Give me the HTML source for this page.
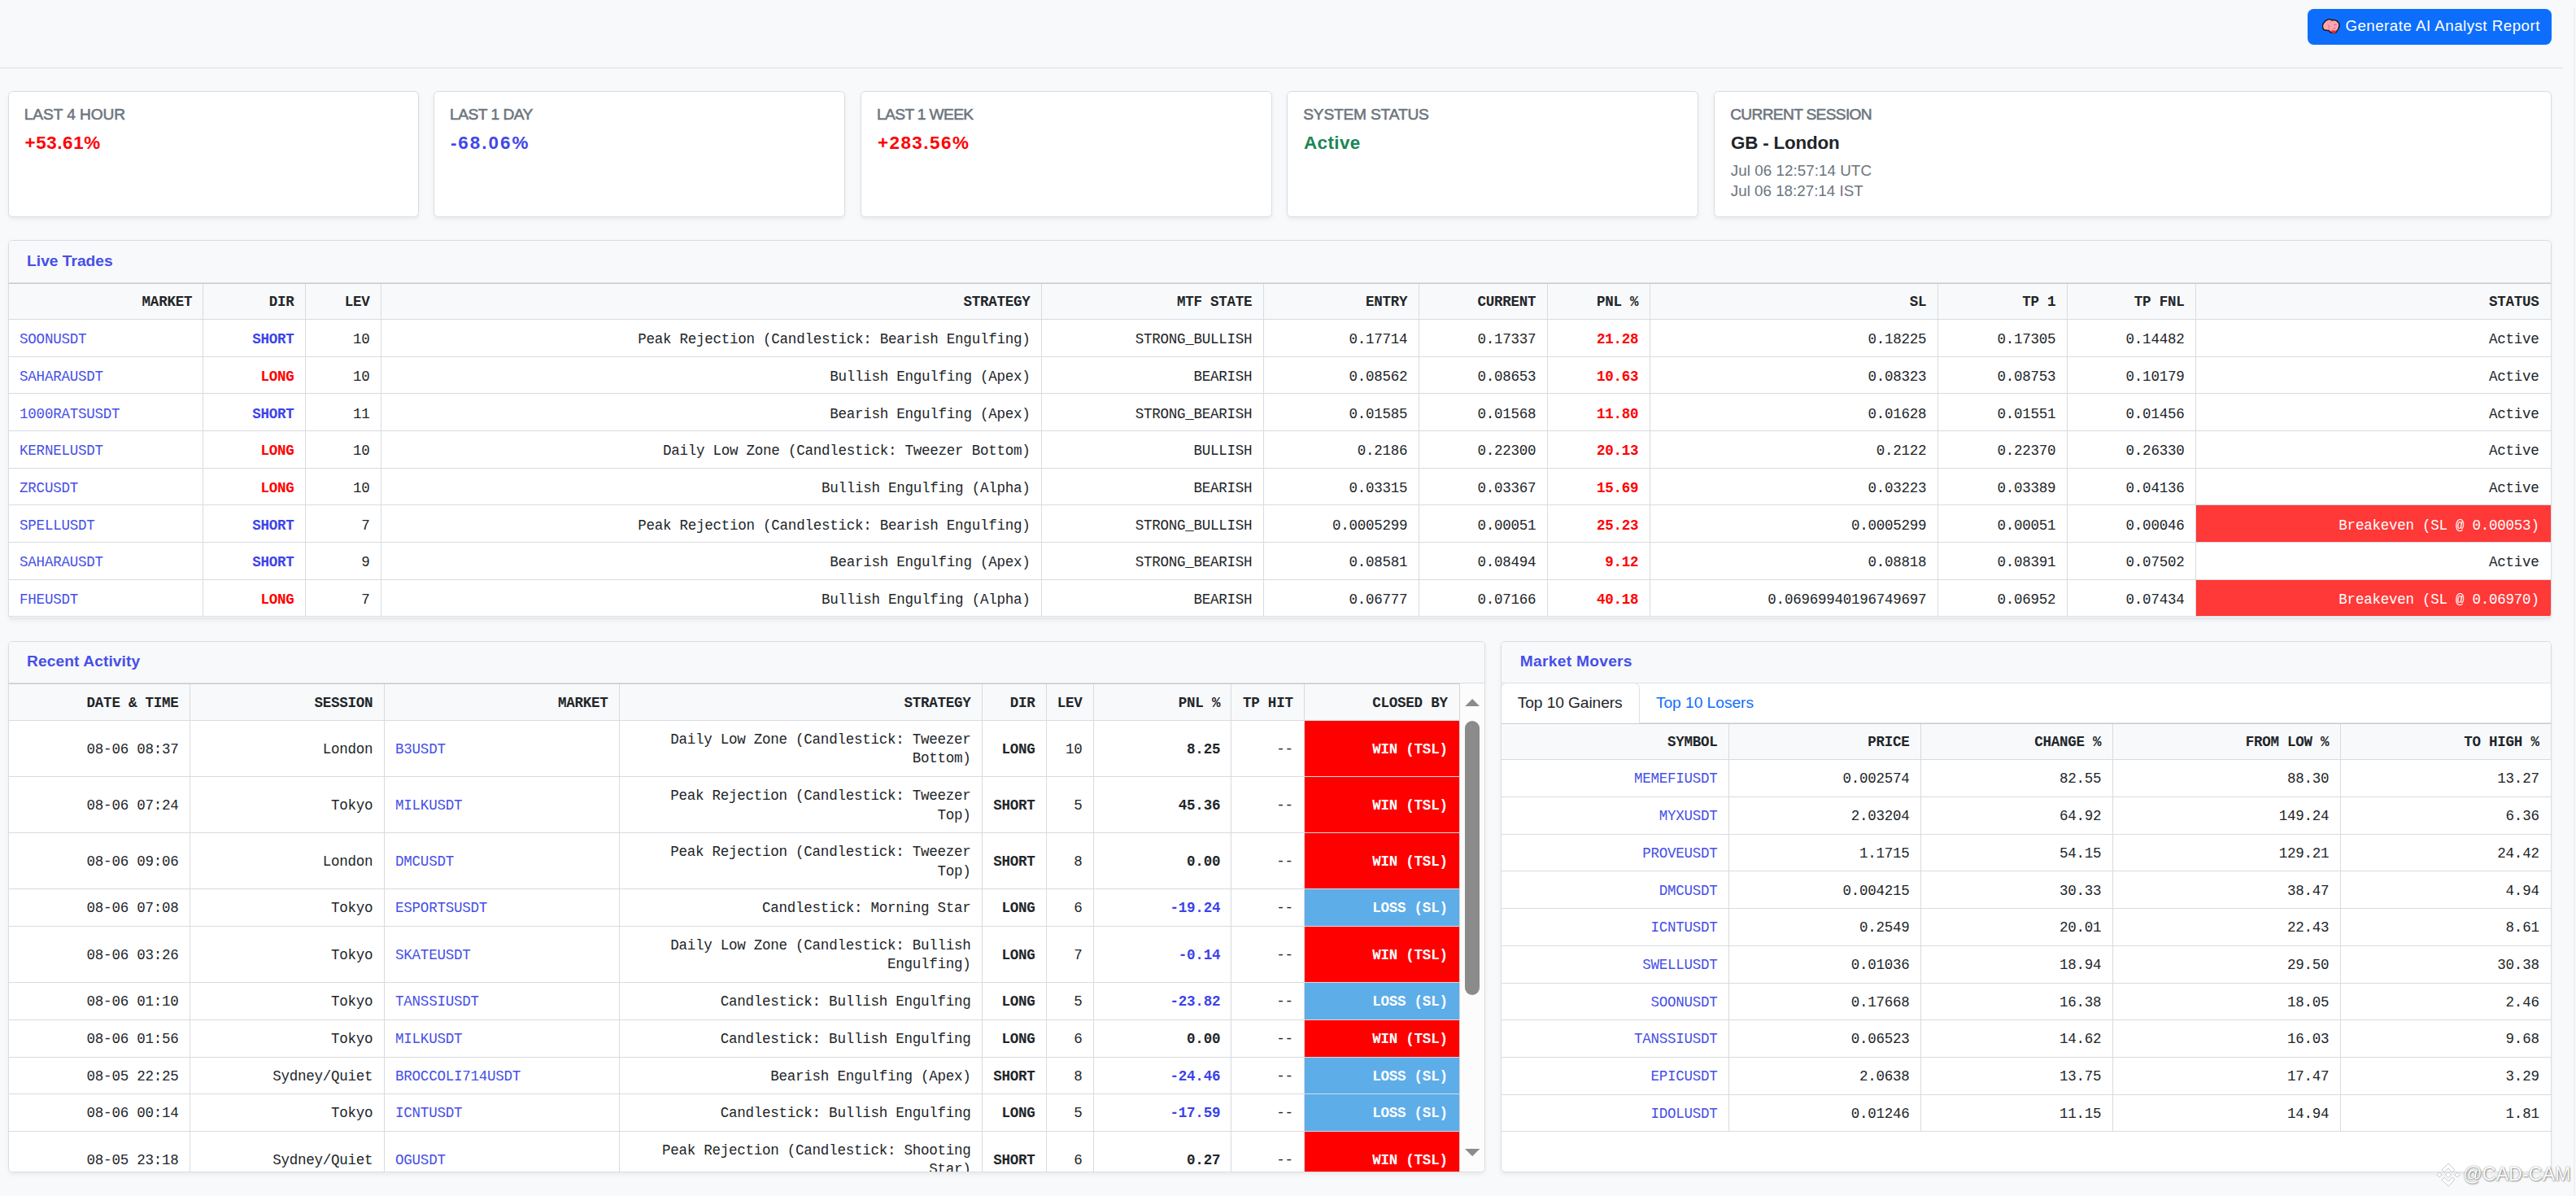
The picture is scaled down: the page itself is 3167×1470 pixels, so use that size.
<!DOCTYPE html>
<html lang="en">
<head>
<meta charset="utf-8">
<title>Trading Dashboard</title>
<style>
html,body{margin:0;padding:0}
body{width:3167px;height:1470px;overflow:hidden;background:#f8f9fa;font-family:"Liberation Sans",sans-serif;color:#212529;position:relative}
*{box-sizing:border-box}
.abs{position:absolute}
.btn{left:2836.8px;top:10.8px;width:300.3px;height:44.3px;background:#0d6efd;border-radius:7.5px;color:#fff;font-size:18.7px;line-height:44px;white-space:nowrap}
.btn svg{position:absolute;left:18.3px;top:12.1px}
.btn span{position:absolute;left:46.6px;top:-0.7px;letter-spacing:0.5px}
.hr{left:0;top:83px;width:3151px;height:1px;background:#dcdfe3}
.card{position:absolute;background:#fff;border:1px solid #d9dce2;border-radius:5.5px;box-shadow:0 2.5px 5px rgba(0,0,0,.055)}
.stat{top:112px;height:154.9px}
.lab{position:absolute;left:19.2px;top:16.15px;font-size:19.2px;line-height:24px;color:#6c757d;font-weight:400;white-space:nowrap;-webkit-text-stroke:0.55px #6c757d}
.val{position:absolute;left:20px;top:49.15px;font-size:22.4px;line-height:28px;font-weight:700;white-space:nowrap}
.sub{position:absolute;left:19.8px;font-size:18.8px;line-height:24px;color:#6c757d;white-space:nowrap}
.sec{overflow:hidden}
.sech{position:absolute;left:0;top:0;right:0;background:#f8f9fa;border-bottom:1px solid #dadde2}
.sech span{position:absolute;left:22.5px;font-size:19.2px;font-weight:700;color:#464fe8;white-space:nowrap;line-height:24px}
.tbl{position:absolute;left:0;border-top:1px solid #c9cdd2;font-family:"Liberation Mono",monospace;font-size:17.5px;letter-spacing:-0.24px;line-height:23.33px;color:#212529}
.r{display:flex;border-bottom:1px solid #d8dbe0;background:#fff}
.r.h{background:#f8f9fa;font-weight:700}
.c{flex:none;height:100%;border-right:1px solid #d8dbe0;padding:0 13.3px 0 13.5px;display:flex;align-items:center;justify-content:flex-end;text-align:right;white-space:nowrap}
.c.last{border-right:none;padding-right:14.6px}
.c.l{justify-content:flex-start;text-align:left}
.c span{display:block;position:relative;top:var(--b,2.7px)}
.r.h .c span{top:var(--h,1.3px)}
.lk{color:#464fe8}
.b{font-weight:700}
.sh{color:#3b43ea}
.lg{color:#ff0000}
.be{background:#ff3838;color:#fff}
.win{background:#ff0000;color:#fff}
.loss{background:#5dade9;color:#fff}
.tab{position:absolute;font-size:19.2px;line-height:24px;white-space:nowrap}
.wm{position:absolute;left:3028.3px;top:1428.6px;font-size:23px;line-height:28px;color:#fff;white-space:nowrap;letter-spacing:0.2px;text-shadow:0 0 1.5px rgba(0,0,0,.55),1px 1px 2px rgba(0,0,0,.35)}
</style>
</head>
<body>

<div class="abs btn"><svg width="21.6" height="18.6" viewBox="-0.4 -0.4 21.6 18.6"><path d="M8.2 0.4C9.8 0.3 11.2 1 12.3 1.7 13.3 1 14.6 0.9 15.6 1.3 17 1.7 18.2 2.6 18.8 3.6 19.9 4.5 20.6 5.8 20.5 7.1 20.7 8.4 20.4 9.6 19.9 10.5 19.8 11.5 19.5 12.3 19 12.9 18.6 13.8 18 14.4 17.3 14.9 17 16 16.5 16.8 15.8 17.2 14.9 17.7 14 17.8 13.2 17.6 12.1 17.5 11 17.2 10.2 16.6 9.2 16 8.4 15.2 7.9 14.3 7 14.1 6.2 13.9 5.3 13.8 4 14 2.8 13.9 1.8 13.4 1 12.6 0.5 11.6 0.3 10.5 0 9.6 0 8.6 0.2 7.6 0.4 6.4 1 5.3 1.8 4.4 2.5 3.3 3.5 2.4 4.7 1.8 5.7 1 6.9 0.5 8.2 0.4Z" fill="#fba7b2" stroke="#1f1819" stroke-width="1.5" stroke-linejoin="round"/><path d="M10.3 14.1L17.2 14.1C17 15.6 16.5 16.5 15.7 16.9 14.9 17.3 14 17.4 13.2 17.2 12.1 17.1 11.1 16.8 10.4 16.2Z" fill="#ff2233"/><path d="M10.5 2.6L9.4 4.4M6.4 7L7.9 8.5L7.6 12.3M7.9 8.5L8.9 7.6M15.5 5.6L15.5 7.3M13.5 7.3L17.6 7.3M16.4 11.1L14.3 11.1L12.6 13.2" fill="none" stroke="#f2506f" stroke-width="0.8"/></svg><span>Generate AI Analyst Report</span></div>
<div class="abs hr"></div>

<div class="card stat" style="left:9.6px;width:505.4px"><div class="lab" style="letter-spacing:-0.12px">LAST 4 HOUR</div><div class="val" style="letter-spacing:0.58px;color:#ff0000">+53.61%</div></div>
<div class="card stat" style="left:532.9px;width:506.1px"><div class="lab" style="letter-spacing:-0.52px">LAST 1 DAY</div><div class="val" style="letter-spacing:2.0px;color:#4047e8">-68.06%</div></div>
<div class="card stat" style="left:1057.9px;width:506.1px"><div class="lab" style="letter-spacing:-0.64px">LAST 1 WEEK</div><div class="val" style="letter-spacing:1.5px;color:#ff0000">+283.56%</div></div>
<div class="card stat" style="left:1582px;width:505.9px"><div class="lab" style="letter-spacing:-0.2px">SYSTEM STATUS</div><div class="val" style="letter-spacing:0.4px;color:#198754">Active</div></div>
<div class="card stat" style="left:2107px;width:1029.6px"><div class="lab" style="letter-spacing:-0.69px">CURRENT SESSION</div><div class="val" style="letter-spacing:-0.18px;color:#212529">GB - London</div><div class="sub" style="top:85.2px;letter-spacing:0.05px">Jul 06 12:57:14 UTC</div><div class="sub" style="top:110.2px">Jul 06 18:27:14 IST</div></div>

<!-- Live Trades -->
<div class="card sec" style="left:9.6px;top:294.6px;width:3127px;height:465.4px">
  <div class="sech" style="height:52px"><span style="top:12.95px">Live Trades</span></div>
  <div class="tbl" style="top:52px;width:3127px">
<div class="r h" style="height:44.3px"><div class="c " style="width:239.9px;"><span>MARKET</span></div><div class="c " style="width:125.3px;"><span>DIR</span></div><div class="c " style="width:93.1px;"><span>LEV</span></div><div class="c " style="width:811.9px;"><span>STRATEGY</span></div><div class="c " style="width:272.9px;"><span>MTF STATE</span></div><div class="c " style="width:190.9px;"><span>ENTRY</span></div><div class="c " style="width:158.0px;"><span>CURRENT</span></div><div class="c " style="width:126.1px;"><span>PNL %</span></div><div class="c " style="width:354.0px;"><span>SL</span></div><div class="c " style="width:159.0px;"><span>TP 1</span></div><div class="c " style="width:158.1px;"><span>TP FNL</span></div><div class="c  last" style="width:436.5px;"><span>STATUS</span></div></div>
<div class="r " style="height:45.7px"><div class="c l lk" style="width:239.9px;"><span>SOONUSDT</span></div><div class="c b sh" style="width:125.3px;"><span>SHORT</span></div><div class="c " style="width:93.1px;"><span>10</span></div><div class="c " style="width:811.9px;"><span>Peak Rejection (Candlestick: Bearish Engulfing)</span></div><div class="c " style="width:272.9px;"><span>STRONG_BULLISH</span></div><div class="c " style="width:190.9px;"><span>0.17714</span></div><div class="c " style="width:158.0px;"><span>0.17337</span></div><div class="c b lg" style="width:126.1px;"><span>21.28</span></div><div class="c " style="width:354.0px;"><span>0.18225</span></div><div class="c " style="width:159.0px;"><span>0.17305</span></div><div class="c " style="width:158.1px;"><span>0.14482</span></div><div class="c  last" style="width:436.5px;"><span>Active</span></div></div>
<div class="r " style="height:45.7px"><div class="c l lk" style="width:239.9px;"><span>SAHARAUSDT</span></div><div class="c b lg" style="width:125.3px;"><span>LONG</span></div><div class="c " style="width:93.1px;"><span>10</span></div><div class="c " style="width:811.9px;"><span>Bullish Engulfing (Apex)</span></div><div class="c " style="width:272.9px;"><span>BEARISH</span></div><div class="c " style="width:190.9px;"><span>0.08562</span></div><div class="c " style="width:158.0px;"><span>0.08653</span></div><div class="c b lg" style="width:126.1px;"><span>10.63</span></div><div class="c " style="width:354.0px;"><span>0.08323</span></div><div class="c " style="width:159.0px;"><span>0.08753</span></div><div class="c " style="width:158.1px;"><span>0.10179</span></div><div class="c  last" style="width:436.5px;"><span>Active</span></div></div>
<div class="r " style="height:45.7px"><div class="c l lk" style="width:239.9px;"><span>1000RATSUSDT</span></div><div class="c b sh" style="width:125.3px;"><span>SHORT</span></div><div class="c " style="width:93.1px;"><span>11</span></div><div class="c " style="width:811.9px;"><span>Bearish Engulfing (Apex)</span></div><div class="c " style="width:272.9px;"><span>STRONG_BEARISH</span></div><div class="c " style="width:190.9px;"><span>0.01585</span></div><div class="c " style="width:158.0px;"><span>0.01568</span></div><div class="c b lg" style="width:126.1px;"><span>11.80</span></div><div class="c " style="width:354.0px;"><span>0.01628</span></div><div class="c " style="width:159.0px;"><span>0.01551</span></div><div class="c " style="width:158.1px;"><span>0.01456</span></div><div class="c  last" style="width:436.5px;"><span>Active</span></div></div>
<div class="r " style="height:45.7px"><div class="c l lk" style="width:239.9px;"><span>KERNELUSDT</span></div><div class="c b lg" style="width:125.3px;"><span>LONG</span></div><div class="c " style="width:93.1px;"><span>10</span></div><div class="c " style="width:811.9px;"><span>Daily Low Zone (Candlestick: Tweezer Bottom)</span></div><div class="c " style="width:272.9px;"><span>BULLISH</span></div><div class="c " style="width:190.9px;"><span>0.2186</span></div><div class="c " style="width:158.0px;"><span>0.22300</span></div><div class="c b lg" style="width:126.1px;"><span>20.13</span></div><div class="c " style="width:354.0px;"><span>0.2122</span></div><div class="c " style="width:159.0px;"><span>0.22370</span></div><div class="c " style="width:158.1px;"><span>0.26330</span></div><div class="c  last" style="width:436.5px;"><span>Active</span></div></div>
<div class="r " style="height:45.7px"><div class="c l lk" style="width:239.9px;"><span>ZRCUSDT</span></div><div class="c b lg" style="width:125.3px;"><span>LONG</span></div><div class="c " style="width:93.1px;"><span>10</span></div><div class="c " style="width:811.9px;"><span>Bullish Engulfing (Alpha)</span></div><div class="c " style="width:272.9px;"><span>BEARISH</span></div><div class="c " style="width:190.9px;"><span>0.03315</span></div><div class="c " style="width:158.0px;"><span>0.03367</span></div><div class="c b lg" style="width:126.1px;"><span>15.69</span></div><div class="c " style="width:354.0px;"><span>0.03223</span></div><div class="c " style="width:159.0px;"><span>0.03389</span></div><div class="c " style="width:158.1px;"><span>0.04136</span></div><div class="c  last" style="width:436.5px;"><span>Active</span></div></div>
<div class="r " style="height:45.7px"><div class="c l lk" style="width:239.9px;"><span>SPELLUSDT</span></div><div class="c b sh" style="width:125.3px;"><span>SHORT</span></div><div class="c " style="width:93.1px;"><span>7</span></div><div class="c " style="width:811.9px;"><span>Peak Rejection (Candlestick: Bearish Engulfing)</span></div><div class="c " style="width:272.9px;"><span>STRONG_BULLISH</span></div><div class="c " style="width:190.9px;"><span>0.0005299</span></div><div class="c " style="width:158.0px;"><span>0.00051</span></div><div class="c b lg" style="width:126.1px;"><span>25.23</span></div><div class="c " style="width:354.0px;"><span>0.0005299</span></div><div class="c " style="width:159.0px;"><span>0.00051</span></div><div class="c " style="width:158.1px;"><span>0.00046</span></div><div class="c be last" style="width:436.5px;"><span>Breakeven (SL @ 0.00053)</span></div></div>
<div class="r " style="height:45.7px"><div class="c l lk" style="width:239.9px;"><span>SAHARAUSDT</span></div><div class="c b sh" style="width:125.3px;"><span>SHORT</span></div><div class="c " style="width:93.1px;"><span>9</span></div><div class="c " style="width:811.9px;"><span>Bearish Engulfing (Apex)</span></div><div class="c " style="width:272.9px;"><span>STRONG_BEARISH</span></div><div class="c " style="width:190.9px;"><span>0.08581</span></div><div class="c " style="width:158.0px;"><span>0.08494</span></div><div class="c b lg" style="width:126.1px;"><span>9.12</span></div><div class="c " style="width:354.0px;"><span>0.08818</span></div><div class="c " style="width:159.0px;"><span>0.08391</span></div><div class="c " style="width:158.1px;"><span>0.07502</span></div><div class="c  last" style="width:436.5px;"><span>Active</span></div></div>
<div class="r " style="height:45.7px"><div class="c l lk" style="width:239.9px;"><span>FHEUSDT</span></div><div class="c b lg" style="width:125.3px;"><span>LONG</span></div><div class="c " style="width:93.1px;"><span>7</span></div><div class="c " style="width:811.9px;"><span>Bullish Engulfing (Alpha)</span></div><div class="c " style="width:272.9px;"><span>BEARISH</span></div><div class="c " style="width:190.9px;"><span>0.06777</span></div><div class="c " style="width:158.0px;"><span>0.07166</span></div><div class="c b lg" style="width:126.1px;"><span>40.18</span></div><div class="c " style="width:354.0px;"><span>0.06969940196749697</span></div><div class="c " style="width:159.0px;"><span>0.06952</span></div><div class="c " style="width:158.1px;"><span>0.07434</span></div><div class="c be last" style="width:436.5px;"><span>Breakeven (SL @ 0.06970)</span></div></div>
  </div>
</div>

<!-- Recent Activity -->
<div class="card sec" style="left:9.6px;top:788.2px;width:1816px;height:652.4px">
  <div class="sech" style="height:50.9px"><span style="top:12.2px;letter-spacing:0.08px">Recent Activity</span></div>
  <div class="tbl" style="top:50.9px;width:1786px;--b:1.2px;--h:1.3px">
<div class="r h" style="height:45.1px"><div class="c " style="width:223.2px;"><span>DATE &amp; TIME</span></div><div class="c " style="width:238.8px;"><span>SESSION</span></div><div class="c " style="width:289.3px;"><span>MARKET</span></div><div class="c " style="width:446.0px;"><span>STRATEGY</span></div><div class="c " style="width:79.0px;"><span>DIR</span></div><div class="c " style="width:57.9px;"><span>LEV</span></div><div class="c " style="width:169.7px;"><span>PNL %</span></div><div class="c " style="width:89.5px;"><span>TP HIT</span></div><div class="c  last" style="width:190.3px;"><span>CLOSED BY</span></div></div>
<div class="r " style="height:69.1px"><div class="c " style="width:223.2px;"><span>08-06 08:37</span></div><div class="c " style="width:238.8px;"><span>London</span></div><div class="c l lk" style="width:289.3px;"><span>B3USDT</span></div><div class="c " style="width:446.0px;"><span>Daily Low Zone (Candlestick: Tweezer<br>Bottom)</span></div><div class="c b" style="width:79.0px;"><span>LONG</span></div><div class="c " style="width:57.9px;"><span>10</span></div><div class="c b" style="width:169.7px;"><span>8.25</span></div><div class="c " style="width:89.5px;"><span>--</span></div><div class="c b win last" style="width:190.3px;"><span>WIN (TSL)</span></div></div>
<div class="r " style="height:69.1px"><div class="c " style="width:223.2px;"><span>08-06 07:24</span></div><div class="c " style="width:238.8px;"><span>Tokyo</span></div><div class="c l lk" style="width:289.3px;"><span>MILKUSDT</span></div><div class="c " style="width:446.0px;"><span>Peak Rejection (Candlestick: Tweezer<br>Top)</span></div><div class="c b" style="width:79.0px;"><span>SHORT</span></div><div class="c " style="width:57.9px;"><span>5</span></div><div class="c b" style="width:169.7px;"><span>45.36</span></div><div class="c " style="width:89.5px;"><span>--</span></div><div class="c b win last" style="width:190.3px;"><span>WIN (TSL)</span></div></div>
<div class="r " style="height:69.1px"><div class="c " style="width:223.2px;"><span>08-06 09:06</span></div><div class="c " style="width:238.8px;"><span>London</span></div><div class="c l lk" style="width:289.3px;"><span>DMCUSDT</span></div><div class="c " style="width:446.0px;"><span>Peak Rejection (Candlestick: Tweezer<br>Top)</span></div><div class="c b" style="width:79.0px;"><span>SHORT</span></div><div class="c " style="width:57.9px;"><span>8</span></div><div class="c b" style="width:169.7px;"><span>0.00</span></div><div class="c " style="width:89.5px;"><span>--</span></div><div class="c b win last" style="width:190.3px;"><span>WIN (TSL)</span></div></div>
<div class="r " style="height:45.72px"><div class="c " style="width:223.2px;"><span>08-06 07:08</span></div><div class="c " style="width:238.8px;"><span>Tokyo</span></div><div class="c l lk" style="width:289.3px;"><span>ESPORTSUSDT</span></div><div class="c " style="width:446.0px;"><span>Candlestick: Morning Star</span></div><div class="c b" style="width:79.0px;"><span>LONG</span></div><div class="c " style="width:57.9px;"><span>6</span></div><div class="c b sh" style="width:169.7px;"><span>-19.24</span></div><div class="c " style="width:89.5px;"><span>--</span></div><div class="c b loss last" style="width:190.3px;"><span>LOSS (SL)</span></div></div>
<div class="r " style="height:69.1px"><div class="c " style="width:223.2px;"><span>08-06 03:26</span></div><div class="c " style="width:238.8px;"><span>Tokyo</span></div><div class="c l lk" style="width:289.3px;"><span>SKATEUSDT</span></div><div class="c " style="width:446.0px;"><span>Daily Low Zone (Candlestick: Bullish<br>Engulfing)</span></div><div class="c b" style="width:79.0px;"><span>LONG</span></div><div class="c " style="width:57.9px;"><span>7</span></div><div class="c b sh" style="width:169.7px;"><span>-0.14</span></div><div class="c " style="width:89.5px;"><span>--</span></div><div class="c b win last" style="width:190.3px;"><span>WIN (TSL)</span></div></div>
<div class="r " style="height:45.72px"><div class="c " style="width:223.2px;"><span>08-06 01:10</span></div><div class="c " style="width:238.8px;"><span>Tokyo</span></div><div class="c l lk" style="width:289.3px;"><span>TANSSIUSDT</span></div><div class="c " style="width:446.0px;"><span>Candlestick: Bullish Engulfing</span></div><div class="c b" style="width:79.0px;"><span>LONG</span></div><div class="c " style="width:57.9px;"><span>5</span></div><div class="c b sh" style="width:169.7px;"><span>-23.82</span></div><div class="c " style="width:89.5px;"><span>--</span></div><div class="c b loss last" style="width:190.3px;"><span>LOSS (SL)</span></div></div>
<div class="r " style="height:45.72px"><div class="c " style="width:223.2px;"><span>08-06 01:56</span></div><div class="c " style="width:238.8px;"><span>Tokyo</span></div><div class="c l lk" style="width:289.3px;"><span>MILKUSDT</span></div><div class="c " style="width:446.0px;"><span>Candlestick: Bullish Engulfing</span></div><div class="c b" style="width:79.0px;"><span>LONG</span></div><div class="c " style="width:57.9px;"><span>6</span></div><div class="c b" style="width:169.7px;"><span>0.00</span></div><div class="c " style="width:89.5px;"><span>--</span></div><div class="c b win last" style="width:190.3px;"><span>WIN (TSL)</span></div></div>
<div class="r " style="height:45.72px"><div class="c " style="width:223.2px;"><span>08-05 22:25</span></div><div class="c " style="width:238.8px;"><span>Sydney/Quiet</span></div><div class="c l lk" style="width:289.3px;"><span>BROCCOLI714USDT</span></div><div class="c " style="width:446.0px;"><span>Bearish Engulfing (Apex)</span></div><div class="c b" style="width:79.0px;"><span>SHORT</span></div><div class="c " style="width:57.9px;"><span>8</span></div><div class="c b sh" style="width:169.7px;"><span>-24.46</span></div><div class="c " style="width:89.5px;"><span>--</span></div><div class="c b loss last" style="width:190.3px;"><span>LOSS (SL)</span></div></div>
<div class="r " style="height:45.72px"><div class="c " style="width:223.2px;"><span>08-06 00:14</span></div><div class="c " style="width:238.8px;"><span>Tokyo</span></div><div class="c l lk" style="width:289.3px;"><span>ICNTUSDT</span></div><div class="c " style="width:446.0px;"><span>Candlestick: Bullish Engulfing</span></div><div class="c b" style="width:79.0px;"><span>LONG</span></div><div class="c " style="width:57.9px;"><span>5</span></div><div class="c b sh" style="width:169.7px;"><span>-17.59</span></div><div class="c " style="width:89.5px;"><span>--</span></div><div class="c b loss last" style="width:190.3px;"><span>LOSS (SL)</span></div></div>
<div class="r " style="height:69.1px"><div class="c " style="width:223.2px;"><span>08-05 23:18</span></div><div class="c " style="width:238.8px;"><span>Sydney/Quiet</span></div><div class="c l lk" style="width:289.3px;"><span>OGUSDT</span></div><div class="c " style="width:446.0px;"><span>Peak Rejection (Candlestick: Shooting<br>Star)</span></div><div class="c b" style="width:79.0px;"><span>SHORT</span></div><div class="c " style="width:57.9px;"><span>6</span></div><div class="c b" style="width:169.7px;"><span>0.27</span></div><div class="c " style="width:89.5px;"><span>--</span></div><div class="c b win last" style="width:190.3px;"><span>WIN (TSL)</span></div></div>
  </div>
  <div class="abs" style="left:1783.5px;top:50.9px;width:32px;height:600px;background:#fcfcfc;border-left:1px solid #d4d7db"></div>
  <div class="abs" style="left:1790.6px;top:96.7px;width:17.7px;height:337.6px;border-radius:9px;background:#8b8b8b"></div>
  <svg class="abs" style="left:1790.3px;top:69.6px" width="18.3" height="9.2" viewBox="0 0 18.3 9.2"><path d="M0 9.2L9.15 0L18.3 9.2Z" fill="#8b8b8b"/></svg>
  <svg class="abs" style="left:1790.3px;top:622.7px" width="18.3" height="9.2" viewBox="0 0 18.3 9.2"><path d="M0 0L9.15 9.2L18.3 0Z" fill="#8b8b8b"/></svg>
</div>

<!-- Market Movers -->
<div class="card sec" style="left:1845.3px;top:788.2px;width:1291.3px;height:652.4px">
  <div class="sech" style="height:49.7px;border-bottom:none"><span style="top:11.9px;letter-spacing:0.28px">Market Movers</span></div>
  <div class="abs" style="left:0;top:49.7px;width:100%;height:1px;background:#dee2e6"></div>
  <div class="abs" style="left:0;top:99.2px;width:100%;height:1px;background:#dee2e6"></div>
  <div class="abs" style="left:-1px;top:49.7px;width:170.5px;height:49.7px;background:#fff;border:1px solid #dee2e6;border-bottom:none;border-radius:7px 7px 0 0"></div>
    <div class="tab" style="left:19.5px;top:63.15px;color:#212529;letter-spacing:-0.1px">Top 10 Gainers</div>
  <div class="tab" style="left:189.6px;top:63.15px;color:#0d6efd;letter-spacing:-0.03px">Top 10 Losers</div>
  <div class="tbl" style="top:100.2px;width:1291.3px;--b:1.4px;--h:0.9px">
<div class="r h" style="height:43.9px"><div class="c " style="width:279.6px;"><span>SYMBOL</span></div><div class="c " style="width:235.9px;"><span>PRICE</span></div><div class="c " style="width:235.9px;"><span>CHANGE %</span></div><div class="c " style="width:279.9px;"><span>FROM LOW %</span></div><div class="c  last" style="width:258.7px;"><span>TO HIGH %</span></div></div>
<div class="r " style="height:45.72px"><div class="c lk" style="width:279.6px;"><span>MEMEFIUSDT</span></div><div class="c " style="width:235.9px;"><span>0.002574</span></div><div class="c " style="width:235.9px;"><span>82.55</span></div><div class="c " style="width:279.9px;"><span>88.30</span></div><div class="c  last" style="width:258.7px;"><span>13.27</span></div></div>
<div class="r " style="height:45.72px"><div class="c lk" style="width:279.6px;"><span>MYXUSDT</span></div><div class="c " style="width:235.9px;"><span>2.03204</span></div><div class="c " style="width:235.9px;"><span>64.92</span></div><div class="c " style="width:279.9px;"><span>149.24</span></div><div class="c  last" style="width:258.7px;"><span>6.36</span></div></div>
<div class="r " style="height:45.72px"><div class="c lk" style="width:279.6px;"><span>PROVEUSDT</span></div><div class="c " style="width:235.9px;"><span>1.1715</span></div><div class="c " style="width:235.9px;"><span>54.15</span></div><div class="c " style="width:279.9px;"><span>129.21</span></div><div class="c  last" style="width:258.7px;"><span>24.42</span></div></div>
<div class="r " style="height:45.72px"><div class="c lk" style="width:279.6px;"><span>DMCUSDT</span></div><div class="c " style="width:235.9px;"><span>0.004215</span></div><div class="c " style="width:235.9px;"><span>30.33</span></div><div class="c " style="width:279.9px;"><span>38.47</span></div><div class="c  last" style="width:258.7px;"><span>4.94</span></div></div>
<div class="r " style="height:45.72px"><div class="c lk" style="width:279.6px;"><span>ICNTUSDT</span></div><div class="c " style="width:235.9px;"><span>0.2549</span></div><div class="c " style="width:235.9px;"><span>20.01</span></div><div class="c " style="width:279.9px;"><span>22.43</span></div><div class="c  last" style="width:258.7px;"><span>8.61</span></div></div>
<div class="r " style="height:45.72px"><div class="c lk" style="width:279.6px;"><span>SWELLUSDT</span></div><div class="c " style="width:235.9px;"><span>0.01036</span></div><div class="c " style="width:235.9px;"><span>18.94</span></div><div class="c " style="width:279.9px;"><span>29.50</span></div><div class="c  last" style="width:258.7px;"><span>30.38</span></div></div>
<div class="r " style="height:45.72px"><div class="c lk" style="width:279.6px;"><span>SOONUSDT</span></div><div class="c " style="width:235.9px;"><span>0.17668</span></div><div class="c " style="width:235.9px;"><span>16.38</span></div><div class="c " style="width:279.9px;"><span>18.05</span></div><div class="c  last" style="width:258.7px;"><span>2.46</span></div></div>
<div class="r " style="height:45.72px"><div class="c lk" style="width:279.6px;"><span>TANSSIUSDT</span></div><div class="c " style="width:235.9px;"><span>0.06523</span></div><div class="c " style="width:235.9px;"><span>14.62</span></div><div class="c " style="width:279.9px;"><span>16.03</span></div><div class="c  last" style="width:258.7px;"><span>9.68</span></div></div>
<div class="r " style="height:45.72px"><div class="c lk" style="width:279.6px;"><span>EPICUSDT</span></div><div class="c " style="width:235.9px;"><span>2.0638</span></div><div class="c " style="width:235.9px;"><span>13.75</span></div><div class="c " style="width:279.9px;"><span>17.47</span></div><div class="c  last" style="width:258.7px;"><span>3.29</span></div></div>
<div class="r " style="height:45.72px"><div class="c lk" style="width:279.6px;"><span>IDOLUSDT</span></div><div class="c " style="width:235.9px;"><span>0.01246</span></div><div class="c " style="width:235.9px;"><span>11.15</span></div><div class="c " style="width:279.9px;"><span>14.94</span></div><div class="c  last" style="width:258.7px;"><span>1.81</span></div></div>
  </div>
</div>

<!-- watermark -->
<svg class="abs" style="left:2995px;top:1429px" width="30" height="30" viewBox="0 0 30 30"><g fill="#fff" stroke="#b9bcc0" stroke-width="0.8"><path d="M15 1L23 9L20 12L15 7L10 12L7 9Z"/><path d="M15 29L23 21L20 18L15 23L10 18L7 21Z"/><path d="M4 12L7 15L4 18L1 15Z"/><path d="M26 12L29 15L26 18L23 15Z"/><path d="M15 11.5L18.5 15L15 18.5L11.5 15Z"/></g></svg>
<div class="wm">@CAD-CAM</div>

<div class="abs" style="left:3164px;top:10px;width:1.5px;height:1460px;background:#eff1f4"></div>
</body>
</html>
